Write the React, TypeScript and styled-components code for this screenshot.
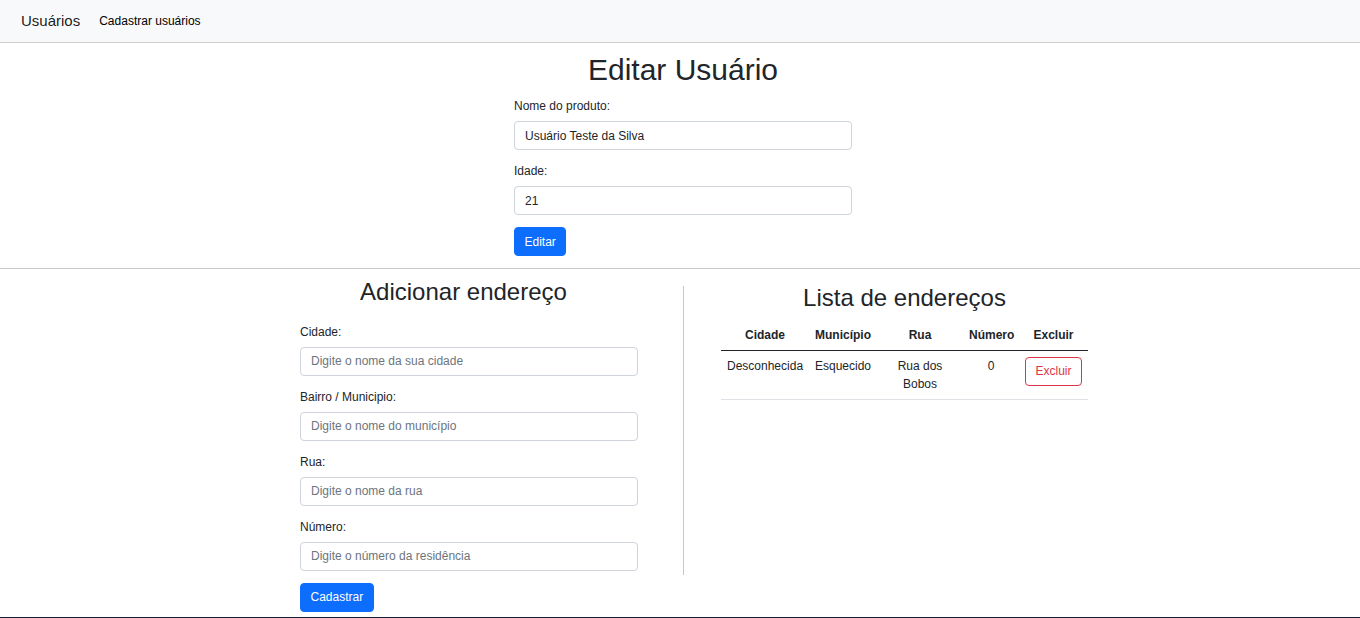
import React from "react";
import styled, { createGlobalStyle } from "styled-components";

const Global = createGlobalStyle`
  html, body { margin: 0; padding: 0; overflow: hidden; background: #fff; }
  body {
    font-family: "Liberation Sans", Arial, sans-serif;
    font-size: 12px;
    line-height: 18px;
    color: #212529;
  }
  * { box-sizing: border-box; }
`;

const Navbar = styled.nav`
  height: 43px;
  background: #f8f9fa;
  border-bottom: 1px solid #cfcfcf;
  display: flex;
  align-items: center;
  padding-left: 21px;
  gap: 19px;
`;

const Brand = styled.a`
  font-size: 15px;
  line-height: 22px;
  color: rgba(0, 0, 0, 0.9);
  text-decoration: none;
  padding-bottom: 1px;
`;

const NavLink = styled.a`
  font-size: 12px;
  color: #000;
  text-decoration: none;
  padding-bottom: 1px;
`;

const TopWrap = styled.div`
  display: flex;
  justify-content: center;
  padding-left: 6px;
`;

const Column = styled.div<{ $w: number; $pt?: number }>`
  width: ${(p) => p.$w}px;
  padding-top: ${(p) => p.$pt ?? 0}px;
  display: flex;
  flex-direction: column;
`;

const Title = styled.h1`
  font-size: 30px;
  font-weight: 400;
  line-height: 36px;
  margin: 9px 0 9px;
  text-align: center;
`;

const SubTitle = styled.h2<{ $mb: number; $pr?: number }>`
  font-size: 24px;
  font-weight: 400;
  line-height: 28.8px;
  margin: 0 0 ${(p) => p.$mb}px;
  padding-right: ${(p) => p.$pr ?? 0}px;
  text-align: center;
`;

const Field = styled.div`
  margin-bottom: 12px;
`;

const Label = styled.label`
  display: block;
  line-height: 18px;
  margin-bottom: 6px;
`;

const Input = styled.input`
  display: block;
  width: 100%;
  height: 29px;
  padding: 4.5px 9px 4.5px 10px;
  font-family: inherit;
  font-size: 12px;
  line-height: 18px;
  color: #212529;
  background: #fff;
  border: 1px solid #ced4da;
  border-radius: 4px;
  outline: none;
  &::placeholder { color: #6c757d; opacity: 1; }
`;

const Button = styled.button<{ $variant?: "primary" | "outlineDanger" }>`
  align-self: flex-start;
  height: 29px;
  padding: 4.5px 9.5px;
  font-family: inherit;
  font-size: 12px;
  line-height: 18px;
  border-radius: 4px;
  cursor: pointer;
  border: 1px solid ${(p) => (p.$variant === "outlineDanger" ? "#dc3545" : "#0d6efd")};
  background: ${(p) => (p.$variant === "outlineDanger" ? "#fff" : "#0d6efd")};
  color: ${(p) => (p.$variant === "outlineDanger" ? "#dc3545" : "#fff")};
`;

const Rule = styled.hr`
  margin: 12px 0 0;
  border: 0;
  border-top: 1px solid #c8c8c8;
`;

const Section = styled.div`
  display: flex;
  justify-content: center;
  padding-left: 28px;
`;

const Divider = styled.div`
  width: 1px;
  background: #c8c8c8;
  align-self: stretch;
  margin: 17px 37px 37px 45px;
`;

const Table = styled.table`
  width: 367px;
  border-collapse: collapse;
  table-layout: fixed;
  text-align: center;
`;

const Th = styled.th`
  padding: 6px;
  font-weight: 700;
  line-height: 18px;
  border-bottom: 1px solid #212529;
  vertical-align: bottom;
`;

const Td = styled.td`
  padding: 6px;
  line-height: 18px;
  vertical-align: top;
  border-bottom: 1px solid #dee2e6;
`;

const Footer = styled.footer`
  margin-top: 5px;
  height: 1px;
  background: #151b3a;
`;

const addressFields = [
  { label: "Cidade:", placeholder: "Digite o nome da sua cidade" },
  { label: "Bairro / Municipio:", placeholder: "Digite o nome do município" },
  { label: "Rua:", placeholder: "Digite o nome da rua" },
  { label: "Número:", placeholder: "Digite o número da residência" },
];

const colWidths = [88, 68, 86, 56, 69];

export default function App() {
  return (
    <>
      <Global />
      <Navbar>
        <Brand href="#">Usuários</Brand>
        <NavLink href="#">Cadastrar usuários</NavLink>
      </Navbar>

      <TopWrap>
        <Column $w={338}>
          <Title>Editar Usuário</Title>
          <Field>
            <Label>Nome do produto:</Label>
            <Input defaultValue="Usuário Teste da Silva" />
          </Field>
          <Field>
            <Label>Idade:</Label>
            <Input defaultValue="21" />
          </Field>
          <Button>Editar</Button>
        </Column>
      </TopWrap>

      <Rule />

      <Section>
        <Column $w={338} $pt={9}>
          <SubTitle $mb={16} $pr={11}>Adicionar endereço</SubTitle>
          {addressFields.map((f) => (
            <Field key={f.label}>
              <Label>{f.label}</Label>
              <Input placeholder={f.placeholder} />
            </Field>
          ))}
          <Button>Cadastrar</Button>
        </Column>

        <Divider />

        <Column $w={367} $pt={15}>
          <SubTitle $mb={7}>Lista de endereços</SubTitle>
          <Table>
            <colgroup>
              {colWidths.map((w, i) => (
                <col key={i} style={{ width: w }} />
              ))}
            </colgroup>
            <thead>
              <tr>
                <Th>Cidade</Th>
                <Th>Município</Th>
                <Th>Rua</Th>
                <Th>Número</Th>
                <Th>Excluir</Th>
              </tr>
            </thead>
            <tbody>
              <tr>
                <Td>Desconhecida</Td>
                <Td>Esquecido</Td>
                <Td>Rua dos Bobos</Td>
                <Td>0</Td>
                <Td>
                  <Button $variant="outlineDanger">Excluir</Button>
                </Td>
              </tr>
            </tbody>
          </Table>
        </Column>
      </Section>

      <Footer />
    </>
  );
}
